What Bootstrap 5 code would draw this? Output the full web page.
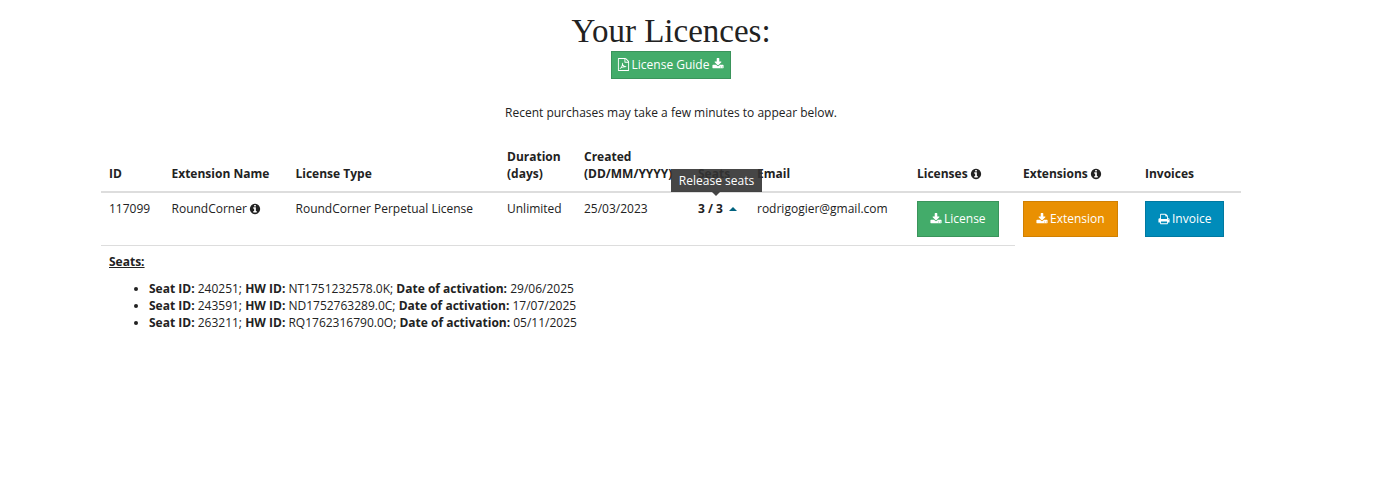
<!DOCTYPE html>
<html lang="en">
<head>
<meta charset="utf-8">
<title>Your Licences</title>
<link href="https://cdn.jsdelivr.net/npm/bootstrap@5.3.0/dist/css/bootstrap.min.css" rel="stylesheet">
<style>
body{font-family:"Open Sans",sans-serif;font-size:12px;line-height:17px;color:#222;background:#fff}
.page-wrap{padding-right:48px}
.lic-wrap{width:1140px;margin:0 auto}
.lic-title{font-family:"Liberation Serif",serif;font-size:33px;line-height:36px;font-weight:400;color:#222;margin:0;padding-top:13px;margin-bottom:2px}
.lic-btn{border-radius:0;font-size:12px;line-height:17px;color:#fff;border:1px solid;display:inline-flex;align-items:center;justify-content:center;gap:2px;padding:8px 12px 9px}
.lic-btn:hover{color:#fff}
.lic-btn svg{fill:#fff;width:12px;height:12px}
.lic-btn.guide{padding:3px 6px 5px;height:28px}
.lic-btn.guide .pdf-i{width:13px;height:13px;margin-left:-1px}
.lic-btn.guide .dl-i{margin-left:1px}
.lic-green{background:#43ac6a;border-color:#3a945b}
.lic-orange{background:#e99002;border-color:#d08002}
.lic-blue{background:#008cba;border-color:#0079a1}
.lic-note{margin:25px 0 0;padding-bottom:19px}
.lic-table{table-layout:fixed;width:1140px;margin:0;--bs-table-color:#222;color:#222;border-collapse:collapse}
.lic-table th,.lic-table td{padding:8px;border:0;font-size:12px;line-height:17px}
.lic-table thead th{vertical-align:bottom;border-bottom:2px solid #ddd;font-weight:700;padding-bottom:9px}
.lic-table .lined td{border-bottom:1px solid #ddd;vertical-align:top;padding-top:7px}
.lic-table .lined td.btn-cell{padding-top:8px}
.lic-table .lined td.open{border-bottom:0}
.lic-i{width:12px;height:12px;fill:#222;vertical-align:-2px}
.seats-cell{font-weight:700;white-space:nowrap}
.caret-up{display:inline-block;width:0;height:0;border-left:4px solid transparent;border-right:4px solid transparent;border-bottom:4px solid #00627f;margin-left:6px;vertical-align:2px}
.seat-tip.tooltip{--bs-tooltip-bg:#333;--bs-tooltip-opacity:.9;--bs-tooltip-font-size:12px;--bs-tooltip-border-radius:0;--bs-tooltip-padding-x:8px;--bs-tooltip-padding-y:3px;--bs-tooltip-arrow-width:10px;--bs-tooltip-arrow-height:5px;--bs-tooltip-margin:0;position:absolute;left:-32px;top:-36px;width:91px;margin:0;font-family:"Open Sans",sans-serif;line-height:17px;font-weight:400}
.seat-tip .tooltip-inner{max-width:none;width:91px;white-space:nowrap;height:23px;padding:3px 0}
.seat-tip .tooltip-arrow{position:absolute;left:40px;transform:translateX(5px)}
.seats-row td{padding-top:7px}
.seats-head{font-weight:700;text-decoration:underline;margin-bottom:10px}
.seats-list{margin:0;padding-left:40px}
.lic-table .tight-i{margin-left:-1px}
</style>
</head>
<body>
<main class="page-wrap">
  <div class="lic-wrap">
    <div class="text-center">
      <h1 class="lic-title">Your Licences:</h1>
      <a href="#" class="btn lic-btn guide lic-green">
        <svg class="pdf-i" viewBox="0 0 1792 1792" aria-hidden="true"><path fill-rule="evenodd" d="M1596 380q28 28 48 76t20 88v1152q0 40-28 68t-68 28H224q-40 0-68-28t-28-68V96q0-40 28-68t68-28h896q40 0 88 20t76 48zM1152 136v376h376q-10-29-22-41l-313-313q-12-12-41-22zm384 1528V640h-416q-40 0-68-28t-28-68V128H256v1536zM420 1520l-60-70c130-70 240-230 300-420 40-130 40-270 20-350l100-20c20 100 30 190 70 280 90 130 220 220 420 200l20 110c-180 10-300 20-470 70-160 50-300 110-400 200zm350-420c-20 60-70 130-110 190 90-40 190-60 280-80-60-30-120-70-170-110z"/></svg>
        License Guide
        <svg class="dl-i" viewBox="0 0 1792 1792" aria-hidden="true"><use href="#dl"/></svg>
      </a>
      <p class="lic-note">Recent purchases may take a few minutes to appear below.</p>
    </div>
    <table class="table lic-table">
      <colgroup>
        <col style="width:62.5px"><col style="width:124px"><col style="width:211.5px"><col style="width:77px"><col style="width:114px"><col style="width:59px"><col style="width:160px"><col style="width:106px"><col style="width:122px"><col style="width:104px">
      </colgroup>
      <thead>
        <tr>
          <th>ID</th>
          <th>Extension Name</th>
          <th>License Type</th>
          <th>Duration (days)</th>
          <th class="text-nowrap">Created<br>(DD/MM/YYYY)</th>
          <th>Seats</th>
          <th>Email</th>
          <th>Licenses <svg class="lic-i tight-i" viewBox="0 0 1792 1792" aria-hidden="true"><use href="#info"/></svg></th>
          <th>Extensions <svg class="lic-i tight-i" viewBox="0 0 1792 1792" aria-hidden="true"><use href="#info"/></svg></th>
          <th>Invoices</th>
        </tr>
      </thead>
      <tbody>
        <tr class="lined">
          <td>117099</td>
          <td>RoundCorner <svg class="lic-i tight-i" viewBox="0 0 1792 1792" aria-hidden="true"><use href="#info"/></svg></td>
          <td>RoundCorner Perpetual License</td>
          <td>Unlimited</td>
          <td>25/03/2023</td>
          <td class="seats-cell">
            <span class="d-inline-block position-relative">3 / 3<span class="caret-up"></span>
              <span class="tooltip bs-tooltip-top show seat-tip" role="tooltip"><span class="tooltip-arrow d-block"></span><span class="tooltip-inner d-block">Release seats</span></span>
            </span>
          </td>
          <td>rodrigogier@gmail.com</td>
          <td class="btn-cell"><a href="#" class="btn lic-btn lic-green"><svg viewBox="0 0 1792 1792" aria-hidden="true"><use href="#dl"/></svg> License</a></td>
          <td class="btn-cell open"><a href="#" class="btn lic-btn lic-orange"><svg viewBox="0 0 1792 1792" aria-hidden="true"><use href="#dl"/></svg> Extension</a></td>
          <td class="btn-cell open"><a href="#" class="btn lic-btn lic-blue"><svg viewBox="0 0 1792 1792" aria-hidden="true"><path d="M448 1536h896v-256H448v256zm0-640h896V512h-160q-40 0-68-28t-28-68V256H448v640zm1152 64q0-26-19-45t-45-19-45 19-19 45 19 45 45 19 45-19 19-45zm128 0v416q0 13-9.500 22.500t-22.500 9.500h-224v160q0 40-28 68t-68 28H416q-40 0-68-28t-28-68v-160H96q-13 0-22.500-9.500T64 1376V960q0-79 56.500-135.500T256 768h64V224q0-40 28-68t68-28h672q40 0 88 20t76 48l152 152q28 28 48 76t20 88v256h64q79 0 135.500 56.500T1728 960z"/></svg> Invoice</a></td>
        </tr>
        <tr class="seats-row">
          <td colspan="10">
            <div class="seats-head">Seats:</div>
            <ul class="seats-list">
              <li><b>Seat ID:</b> 240251; <b>HW ID:</b> NT1751232578.0K; <b>Date of activation:</b> 29/06/2025</li>
              <li><b>Seat ID:</b> 243591; <b>HW ID:</b> ND1752763289.0C; <b>Date of activation:</b> 17/07/2025</li>
              <li><b>Seat ID:</b> 263211; <b>HW ID:</b> RQ1762316790.0O; <b>Date of activation:</b> 05/11/2025</li>
            </ul>
          </td>
        </tr>
      </tbody>
    </table>
  </div>
</main>
<svg width="0" height="0" class="position-absolute" aria-hidden="true"><defs>
<path id="dl" d="M1344 1344q0-26-19-45t-45-19-45 19-19 45 19 45 45 19 45-19 19-45zm256 0q0-26-19-45t-45-19-45 19-19 45 19 45 45 19 45-19 19-45zm128-224v320q0 40-28 68t-68 28H160q-40 0-68-28t-28-68v-320q0-40 28-68t68-28h465l135 136q58 56 136 56t136-56l136-136h464q40 0 68 28t28 68zm-325-569q17 41-14 70l-448 448q-18 19-45 19t-45-19L403 621q-31-29-14-70 17-39 59-39h256V64q0-26 19-45t45-19h256q26 0 45 19t19 45v448h256q42 0 59 39z"/>
<path id="info" d="M1152 1376v-160q0-14-9-23t-23-9h-96V672q0-14-9-23t-23-9H672q-14 0-23 9t-9 23v160q0 14 9 23t23 9h96v320h-96q-14 0-23 9t-9 23v160q0 14 9 23t23 9h448q14 0 23-9t9-23zm-128-896V320q0-14-9-23t-23-9H800q-14 0-23 9t-9 23v160q0 14 9 23t23 9h192q14 0 23-9t9-23zm640 416q0 209-103 385.500T1281.500 1561 896 1664t-385.500-103T231 1281.500 128 896t103-385.500T510.500 231 896 128t385.500 103T1561 510.500 1664 896z"/>
</defs></svg>
<script src="https://cdn.jsdelivr.net/npm/bootstrap@5.3.0/dist/js/bootstrap.bundle.min.js"></script>
</body>
</html>
